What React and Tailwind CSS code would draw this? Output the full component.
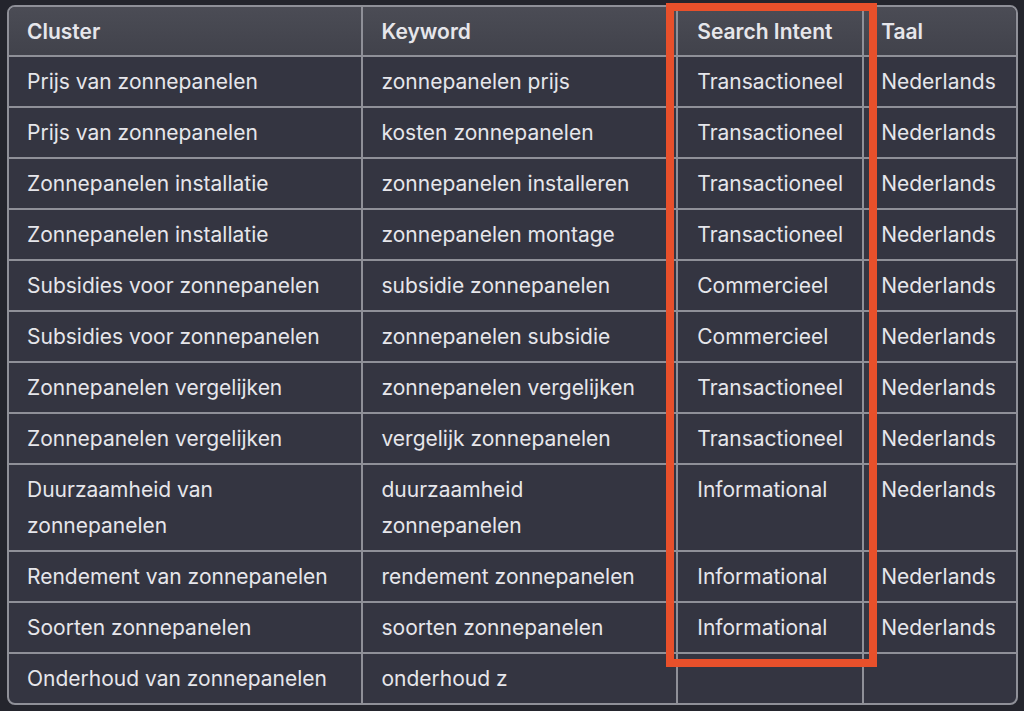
const rows = [
  ["Prijs van zonnepanelen", "zonnepanelen prijs", "Transactioneel", "Nederlands"],
  ["Prijs van zonnepanelen", "kosten zonnepanelen", "Transactioneel", "Nederlands"],
  ["Zonnepanelen installatie", "zonnepanelen installeren", "Transactioneel", "Nederlands"],
  ["Zonnepanelen installatie", "zonnepanelen montage", "Transactioneel", "Nederlands"],
  ["Subsidies voor zonnepanelen", "subsidie zonnepanelen", "Commercieel", "Nederlands"],
  ["Subsidies voor zonnepanelen", "zonnepanelen subsidie", "Commercieel", "Nederlands"],
  ["Zonnepanelen vergelijken", "zonnepanelen vergelijken", "Transactioneel", "Nederlands"],
  ["Zonnepanelen vergelijken", "vergelijk zonnepanelen", "Transactioneel", "Nederlands"],
  ["Duurzaamheid van zonnepanelen", "duurzaamheid zonnepanelen", "Informational", "Nederlands"],
  ["Rendement van zonnepanelen", "rendement zonnepanelen", "Informational", "Nederlands"],
  ["Soorten zonnepanelen", "soorten zonnepanelen", "Informational", "Nederlands"],
  ["Onderhoud van zonnepanelen", "onderhoud z", "", ""],
];

const widths = ["w-[355px]", "w-[316px]", "w-[186px]", "w-[153px]"];
const pads = ["pl-[18px] pr-[20px]", "pl-[18px] pr-[20px]", "pl-[19px] pr-[7px]", "pl-[17px] pr-[1px]"];

export default function App() {
  return (
    <div
      className="relative w-[1024px] h-[711px] bg-[#24252d] pt-[5px] pl-[7px] overflow-hidden"
      style={{ fontFamily: "Inter, 'Noto Sans', sans-serif" }}
    >
      <div className="w-[1011px] rounded-[8px] border-2 border-[#8f9098] overflow-hidden bg-[#343541]">
        <table className="border-collapse table-fixed text-[21px] text-[#e6e6eb]">
          <thead>
            <tr className="bg-gradient-to-b from-[#4b4c55] to-[#41424b]">
              {["Cluster", "Keyword", "Search Intent", "Taal"].map((h, i) => (
                <th
                  key={h}
                  className={`${widths[i]} ${pads[i]} h-[49px] pt-[2px] text-left font-semibold leading-[36px] align-middle whitespace-nowrap ${i > 0 ? "border-l-2 border-[#8f9098]" : ""}`}
                >
                  {h}
                </th>
              ))}
            </tr>
          </thead>
          <tbody>
            {rows.map((r, ri) => (
              <tr key={ri} className="border-t-2 border-[#8f9098]">
                {r.map((c, ci) => (
                  <td
                    key={ci}
                    className={`${widths[ci]} ${pads[ci]} pt-[7px] pb-[6px] leading-[36px] align-top ${ci > 1 ? "whitespace-nowrap" : ""} ${ci > 0 ? "border-l-2 border-[#8f9098]" : ""}`}
                  >
                    {c}
                  </td>
                ))}
              </tr>
            ))}
          </tbody>
        </table>
      </div>
      <div className="absolute left-[666px] top-[3px] w-[211px] h-[664px] border-[8px] border-[#e8502b]" />
    </div>
  );
}
